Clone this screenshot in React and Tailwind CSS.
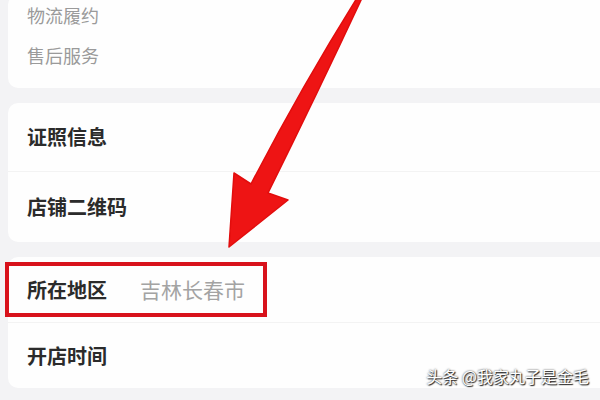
const font = { fontFamily: '"Noto Sans CJK SC", "Noto Sans", sans-serif' };

function Row({ label, value, bold, className = "" }) {
  return (
    <div className={`flex items-center pl-[19px] ${className}`}>
      <span
        className={
          bold
            ? "text-[20px] font-bold text-[#2b2b2b] leading-none"
            : "text-[18px] text-[#9a9a9a] leading-none"
        }
      >
        {label}
      </span>
      {value && (
        <span className="ml-[33px] text-[21px] text-[#a3a3a3] leading-none">
          {value}
        </span>
      )}
    </div>
  );
}

function Arrow() {
  return (
    <svg
      className="absolute left-0 top-0 pointer-events-none"
      width="600"
      height="400"
      viewBox="0 0 600 400"
    >
      <path
        d="M357 -2 L362 -2 Q318 92 268 193 L288 200 L229 247 L234 173 L251 184 Q302 86 357 -2 Z"
        fill="#ee1414"
        stroke="#e20d0d"
        strokeWidth="1.5"
        strokeLinejoin="round"
      />
    </svg>
  );
}

export default function App() {
  return (
    <div
      className="relative w-[600px] h-[400px] overflow-hidden bg-[#f3f3f5]"
      style={font}
    >
      <div className="flex flex-col gap-[15px] pl-[8px] -mt-[5px]">
        <div className="bg-[#fefefe] rounded-l-[10px] flex flex-col pb-[13px]">
          <Row label="物流履约" className="h-[40px]" />
          <Row label="售后服务" className="h-[40px]" />
        </div>
        <div className="bg-[#fefefe] rounded-l-[10px] flex flex-col">
          <Row
            label="证照信息"
            bold
            className="h-[69px] border-b border-[#f3f3f3]"
          />
          <Row label="店铺二维码" bold className="h-[70px]" />
        </div>
        <div className="bg-[#fefefe] rounded-l-[10px] flex flex-col">
          <Row
            label="所在地区"
            value="吉林长春市"
            bold
            className="h-[66px] border-b border-[#f3f3f3]"
          />
          <Row label="开店时间" bold className="h-[65px]" />
        </div>
      </div>

      <div className="absolute left-[5px] top-[262px] w-[262px] h-[55px] border-[4px] border-[#d8121b]" />

      <Arrow />

      <div
        className="absolute right-[11px] top-[368px] text-[16px] text-white leading-none"
        style={{ textShadow: "0 0 2px #333, 1px 1px 1px #222" }}
      >
        头条 @我家丸子是金毛
      </div>
    </div>
  );
}
